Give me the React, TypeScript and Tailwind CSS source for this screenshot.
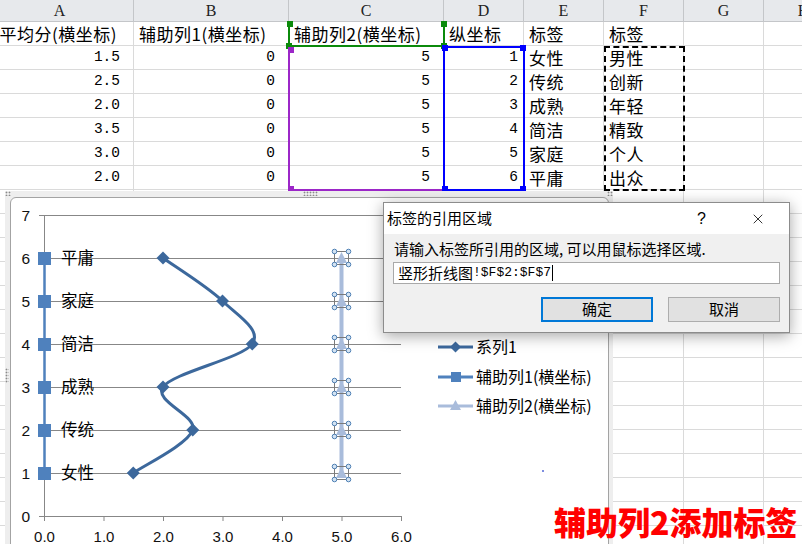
import { X } from "lucide-react";

const letters = ["A", "B", "C", "D", "E", "F", "G", "H"];

const rows: string[][] = [
  ["平均分(横坐标)", "辅助列1(横坐标)", "辅助列2(横坐标)", "纵坐标", "标签", "标签", "", ""],
  ["1.5", "0", "5", "1", "女性", "男性", "", ""],
  ["2.5", "0", "5", "2", "传统", "创新", "", ""],
  ["2.0", "0", "5", "3", "成熟", "年轻", "", ""],
  ["3.5", "0", "5", "4", "简洁", "精致", "", ""],
  ["3.0", "0", "5", "5", "家庭", "个人", "", ""],
  ["2.0", "0", "5", "6", "平庸", "出众", "", ""],
];

const emptyRows = Array.from({ length: 16 }, () => Array(8).fill(""));

const cjk = '"Noto Sans CJK SC", sans-serif';
const latin = '"Liberation Sans", Arial, sans-serif';
const mono = '"Liberation Mono", monospace';

// chart coordinates, page pixels
const px = (u: number) => 44 + 59.5 * u;
const py = (v: number) => 516 - 43 * v;

const series1 = [
  [1.5, 1],
  [2.5, 2],
  [2.0, 3],
  [3.5, 4],
  [3.0, 5],
  [2.0, 6],
].map(([u, v]) => [px(u), py(v)]);

// excel style smoothed line
const smoothPath = (pts: number[][]) => {
  let d = `M${pts[0][0]},${pts[0][1]}`;
  for (let i = 0; i < pts.length - 1; i++) {
    const p0 = pts[Math.max(i - 1, 0)];
    const p1 = pts[i];
    const p2 = pts[i + 1];
    const p3 = pts[Math.min(i + 2, pts.length - 1)];
    const c1 = [p1[0] + (p2[0] - p0[0]) / 6, p1[1] + (p2[1] - p0[1]) / 6];
    const c2 = [p2[0] - (p3[0] - p1[0]) / 6, p2[1] - (p3[1] - p1[1]) / 6];
    d += ` C${c1[0]},${c1[1]} ${c2[0]},${c2[1]} ${p2[0]},${p2[1]}`;
  }
  return d;
};

const labels = ["女性", "传统", "成熟", "简洁", "家庭", "平庸"];

const Cell = ({ r, c, text }: { r: number; c: number; text: string }) => {
  const isNum = r > 0 && c < 4 && text !== "";
  let cls = "h-[24px] border-r border-b border-[#dadada] flex items-center overflow-hidden whitespace-nowrap text-black";
  if (isNum) {
    cls += c === 3 ? " justify-end pr-[5px]" : " justify-end pr-[13px]";
  } else if (r === 0 && c === 0) {
    cls += " justify-end pr-[16px]";
  } else {
    cls += " pl-[5px]";
  }
  return (
    <div className={cls}>
      {isNum ? (
        <span className="text-[14.5px]" style={{ fontFamily: mono }}>
          {text}
        </span>
      ) : (
        <span className="text-[17px] leading-none tracking-[0.5px]">{text}</span>
      )}
    </div>
  );
};

const Grip = ({ className }: { className: string }) => (
  <div
    className={
      "absolute bg-[radial-gradient(circle,#8a8a8a_0.8px,transparent_1.1px)] bg-[length:3px_3px] " + className
    }
  />
);

// a coloured range frame with square handles on its corners
const Range = ({ className, handle, corners }: { className: string; handle: string; corners: string[] }) => (
  <div className={"absolute " + className}>
    {corners.map((pos) => (
      <div key={pos} className={"absolute w-[6px] h-[6px] " + handle + " " + pos} />
    ))}
  </div>
);

const Chart = () => (
  <div className="absolute left-[5px] top-[191px] w-[608px] h-[360px] bg-[#eeeeee] pt-[6px] pl-[5px] pr-[4px]">
    <Grip className="left-0 top-0 w-[6px] h-[5px]" />
    <Grip className="left-[298px] top-0 w-[15px] h-[5px]" />
    <Grip className="right-0 top-0 w-[6px] h-[5px]" />
    <Grip className="left-0 top-[177px] w-[4px] h-[15px]" />
    <div className="h-full bg-white border border-[#a3a3a3] rounded-t-[6px] overflow-hidden">
      <svg width="597" height="360" viewBox="11 198 597 360">
        {/* gridlines */}
        {[1, 2, 3, 4, 5, 6, 7].map((v) => (
          <line key={v} x1={39} x2={401} y1={py(v) + 0.5} y2={py(v) + 0.5} stroke="#878787" strokeWidth={1} />
        ))}
        {/* axes */}
        <line x1={44.5} x2={44.5} y1={py(7)} y2={521} stroke="#878787" strokeWidth={1} />
        <line x1={39} x2={401} y1={516.5} y2={516.5} stroke="#878787" strokeWidth={1} />
        {[0, 1, 2, 3, 4, 5, 6].map((u) => (
          <line key={u} x1={px(u) + 0.5} x2={px(u) + 0.5} y1={516} y2={521} stroke="#878787" strokeWidth={1} />
        ))}
        {[0, 1, 2, 3, 4, 5, 6, 7].map((v) => (
          <text key={v} x={30} y={py(v) + 6} textAnchor="end" fontSize={15.5} fontFamily={latin} fill="#111">
            {v}
          </text>
        ))}
        {[0, 1, 2, 3, 4, 5, 6].map((u) => (
          <text key={u} x={px(u) + 0.5} y={542} textAnchor="middle" fontSize={15} fontFamily={latin} fill="#111">
            {u.toFixed(1)}
          </text>
        ))}

        {/* 辅助列1 */}
        <line x1={44.5} x2={44.5} y1={py(1)} y2={py(6)} stroke="#4f81bd" strokeWidth={2.5} />
        {[1, 2, 3, 4, 5, 6].map((v) => (
          <rect key={v} x={38} y={py(v) - 6} width={13} height={13} fill="#4f81bd" />
        ))}
        {labels.map((t, i) => (
          <text key={t} x={61} y={py(i + 1) + 6} fontSize={16.5} fontFamily={cjk} fill="#000">
            {t}
          </text>
        ))}

        {/* 系列1 */}
        <path d={smoothPath(series1)} fill="none" stroke="#3c689c" strokeWidth={3} />
        {series1.map(([x, y], i) => (
          <polygon key={i} points={`${x},${y - 6.5} ${x + 6.5},${y} ${x},${y + 6.5} ${x - 6.5},${y}`} fill="#3c689c" />
        ))}

        {/* 辅助列2 (selected) */}
        <line x1={341.5} x2={341.5} y1={py(1)} y2={py(6)} stroke="#a9bcdb" strokeWidth={4} />
        {[1, 2, 3, 4, 5, 6].map((v) => {
          const y = py(v);
          return (
            <g key={v}>
              <polygon points={`341.5,${y - 6} 347,${y + 5} 336,${y + 5}`} fill="#a9bcdb" />
              <rect x={334.5} y={y - 6.5} width={14} height={13} fill="none" stroke="#7a7a7a" strokeWidth={1} />
              {[
                [334.5, y - 6.5],
                [348.5, y - 6.5],
                [334.5, y + 6.5],
                [348.5, y + 6.5],
              ].map(([cx, cy], k) => (
                <circle key={k} cx={cx} cy={cy} r={2.3} fill="#d3e3f3" stroke="#4d7fb4" strokeWidth={1} />
              ))}
            </g>
          );
        })}

        {/* legend */}
        <line x1={438} x2={473} y1={347} y2={347} stroke="#3c689c" strokeWidth={3} />
        <polygon points="455.5,341.5 461,347 455.5,352.5 450,347" fill="#3c689c" />
        <text x={476} y={353} fontSize={16} fontFamily={cjk} fill="#000">系列1</text>

        <line x1={438} x2={473} y1={377} y2={377} stroke="#4f81bd" strokeWidth={3} />
        <rect x={451} y={372} width={10} height={10} fill="#4f81bd" />
        <text x={476} y={383} fontSize={16} fontFamily={cjk} fill="#000">辅助列1(横坐标)</text>

        <line x1={438} x2={473} y1={406} y2={406} stroke="#a9bcdb" strokeWidth={3} />
        <polygon points="455.5,400 461,410 450,410" fill="#a9bcdb" />
        <text x={476} y={412} fontSize={16} fontFamily={cjk} fill="#000">辅助列2(横坐标)</text>

        <rect x={542} y={470} width={2} height={2} fill="#7d8de0" />
      </svg>
    </div>
  </div>
);

const Dialog = () => (
  <div className="absolute left-[383px] top-[202px] w-[407px] h-[131px] border border-[#8c8c8c] bg-[#f0f0f0] shadow-[0_3px_14px_rgba(0,0,0,0.35)] flex flex-col">
    <div className="h-[31px] bg-white flex items-center pl-[3px] pr-[23px]">
      <span className="text-[15px] text-black">标签的引用区域</span>
      <span className="ml-auto mr-[44px] text-[16px] text-black" style={{ fontFamily: latin }}>
        ?
      </span>
      <X size={16} strokeWidth={1.2} className="text-black" />
    </div>
    <div className="px-[9px] pt-[5px]">
      <div className="text-[15px] leading-[20px] pl-[1px] text-black">请输入标签所引用的区域, 可以用鼠标选择区域.</div>
      <div className="mt-[3px] h-[22px] border border-[#a9a9a9] bg-white flex items-center pl-[4px]">
        <span className="text-[15px] text-black">竖形折线图</span>
        <span className="text-[13px] text-black" style={{ fontFamily: mono }}>
          !$F$2:$F$7
        </span>
        <span className="w-px h-[16px] bg-black ml-px" />
      </div>
      <div className="flex justify-end gap-[15px] mt-[13px]">
        <button className="w-[112px] h-[25px] bg-[#e1e1e1] border-2 border-[#0078d7] text-[15px] text-black flex items-center justify-center">
          确定
        </button>
        <button className="w-[112px] h-[25px] bg-[#e1e1e1] border border-[#adadad] text-[15px] text-black flex items-center justify-center">
          取消
        </button>
      </div>
    </div>
  </div>
);

export default function App() {
  return (
    <div className="relative w-[802px] h-[544px] overflow-hidden bg-white" style={{ fontFamily: cjk }}>
      {/* sheet */}
      <div className="ml-[-14px] grid grid-cols-[148px_155px_155px_80px_80px_80px_80px_80px]">
        {letters.map((l) => (
          <div
            key={l}
            className="h-[22px] bg-[#e7e9ec] border-r border-b border-[#c4c6c9] flex items-center justify-center text-[16px] text-[#222]"
            style={{ fontFamily: '"Liberation Serif", serif' }}
          >
            {l}
          </div>
        ))}
        {[...rows, ...emptyRows].map((row, r) =>
          row.map((text, c) => <Cell key={`${r}-${c}`} r={r} c={c} text={text} />)
        )}
      </div>

      {/* chart source ranges drawn over the sheet */}
      <Range
        className="left-[288px] top-[22px] w-[157px] h-[25px] border-l-2 border-b-2 border-r-2 border-[#0b8a0b]"
        handle="bg-[#0b8a0b]"
        corners={["-left-[3px] -top-[1px]", "-left-[4px] -bottom-[4px]", "-right-[4px] -top-[1px]", "-right-[4px] -bottom-[4px]"]}
      />
      <Range
        className="left-[288px] top-[47px] w-[157px] h-[144px] border-l-2 border-b-2 border-[#9c27c8]"
        handle="bg-[#9c27c8]"
        corners={["-left-[2px] top-0", "-left-[2px] -bottom-[3px]"]}
      />
      <Range
        className="left-[443px] top-[46px] w-[82px] h-[145px] border-2 border-[#0000ff]"
        handle="bg-[#0000ff]"
        corners={["-left-[3px] -top-[3px]", "-right-[3px] -top-[3px]", "-left-[3px] -bottom-[3px]", "-right-[3px] -bottom-[3px]"]}
      />
      <div className="absolute left-[604px] top-[46px] w-[81px] h-[145px] border-2 border-dashed border-black" />

      <Chart />
      <Dialog />

      <div className="absolute left-[554px] top-[505px] text-[32px] leading-none font-black text-[#ff0000]">
        辅助列2添加标签
      </div>
    </div>
  );
}
